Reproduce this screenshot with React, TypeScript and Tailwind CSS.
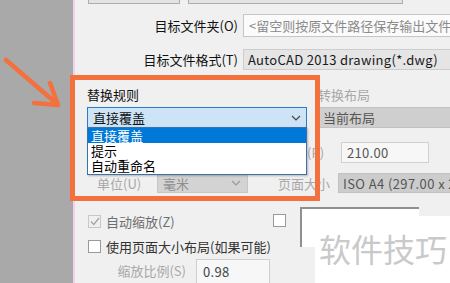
import React from 'react';

const cjk = "font-['Noto_Sans_CJK_SC','Noto_Sans',sans-serif]";

function Chevron({ color }: { color: string }) {
  return (
    <svg width="10" height="6" viewBox="0 0 10 6" className="shrink-0">
      <path d="M1 1 L5 5 L9 1" fill="none" stroke={color} strokeWidth="1.2" />
    </svg>
  );
}

function CheckBox({ checked, disabled }: { checked?: boolean; disabled?: boolean }) {
  return (
    <div
      className={
        'w-[13px] h-[13px] shrink-0 border flex items-center justify-center ' +
        (disabled ? 'border-[#c8c8c8] bg-[#f0f0f0]' : 'border-[#9a9a9a] bg-white')
      }
    >
      {checked && (
        <svg width="10" height="9" viewBox="0 0 10 9">
          <path d="M1 4.5 L3.8 7.5 L9 1" fill="none" stroke="#a5a5a5" strokeWidth="1.3" />
        </svg>
      )}
    </div>
  );
}

export default function App() {
  return (
    <div className={`relative w-[450px] h-[283px] overflow-hidden flex text-[13px] leading-none ${cjk}`}>
      {/* desktop behind the dialog */}
      <div className="w-[73px] shrink-0 bg-[#a9a9a9]" />
      <div className="w-[2px] shrink-0 bg-[#f1d2ee]" />

      {/* dialog */}
      <div className="flex-1 bg-[#f0f0f0] flex flex-col min-w-0">
        {/* bottom edges of buttons above */}
        <div className="h-[4px] flex pl-[13px] gap-[8px]">
          <div className="w-[92px] h-full border-x border-b border-[#adadad] bg-[#e3e3e3]" />
          <div className="w-[215px] h-full border-x border-b border-[#adadad] bg-[#e3e3e3]" />
        </div>

        <div className="mt-[10px] h-[25px] flex items-center">
          <div className="w-[168px] shrink-0 text-right pr-[5px] text-[#111]">目标文件夹(O)</div>
          <div className="flex-1 min-w-0 h-full border border-r-0 border-[#c6c6c6] bg-[#fbfbfb] pl-[5px] flex items-center text-[#8a8a8a] whitespace-nowrap overflow-hidden">
            &lt;留空则按原文件路径保存输出文件
          </div>
        </div>

        <div className="mt-[12px] h-[22px] flex items-center">
          <div className="w-[168px] shrink-0 text-right pr-[5px] text-[#111]">目标文件格式(T)</div>
          <div className="flex-1 h-full border border-r-0 border-[#cdcdcd] bg-[#e5e5e5] pl-[4px] flex items-center text-[#1a1a1a] tracking-[0.3px] whitespace-nowrap overflow-hidden">
            AutoCAD 2013 drawing(*.dwg)
          </div>
        </div>

        <div className="mt-[17px] h-[16px] flex items-center">
          <div className="w-[243px] shrink-0 pl-[12px] text-[#111]">替换规则</div>
          <div className="text-[#a8a8a8]">转换布局</div>
        </div>

        <div className="mt-[5px] h-[22px] flex">
          <div className="relative ml-[12px] w-[220px] shrink-0 h-full border border-[#2f7bc4] bg-[#cde4f7] flex items-center justify-between pl-[5px] pr-[5px] text-[#111]">
            <span>直接覆盖</span>
            <Chevron color="#444" />
            {/* open dropdown list */}
            <div className="absolute left-[-1px] top-full w-[220px] h-[48px] border border-[#3a72b0] bg-white shadow-[1px_1px_2px_rgba(0,0,0,0.25)] flex flex-col z-10 leading-[15px]">
              <div className="h-[15px] bg-[#0078d7] text-white pl-[3px]">直接覆盖</div>
              <div className="h-[15px] text-black pl-[3px]">提示</div>
              <div className="h-[15px] text-black pl-[3px]">自动重命名</div>
            </div>
          </div>
          <div className="ml-[11px] flex-1 h-full border border-r-0 border-[#c2c2c2] bg-[#cfcfcf] pl-[4px] flex items-center text-[#555]">
            当前布局
          </div>
        </div>

        <div className="mt-[14px] h-[22px] flex items-center pl-[232px]">
          <div className="w-[34px] shrink-0 text-[#a8a8a8]">(R)</div>
          <div className="w-[88px] shrink-0 h-full border border-[#d0d0d0] bg-[#f7f7f7] pl-[5px] flex items-center text-[#555] tracking-[0.3px]">
            210.00
          </div>
        </div>

        <div className="mt-[10px] h-[21px] flex items-center pl-[22px]">
          <div className="w-[60px] shrink-0 text-[#a8a8a8]">单位(U)</div>
          <div className="w-[91px] shrink-0 h-full border border-[#c6c6c6] bg-[#d3d3d3] pl-[5px] pr-[6px] flex items-center justify-between text-[#8e8e8e]">
            <span>毫米</span>
            <Chevron color="#9a9a9a" />
          </div>
          <div className="ml-[30px] w-[60px] shrink-0 text-[#a8a8a8]">页面大小</div>
          <div className="flex-1 min-w-0 h-full border border-r-0 border-[#c2c2c2] bg-[#cccccc] pl-[4px] flex items-center text-[#555] tracking-[0.4px] whitespace-nowrap overflow-hidden">
            ISO A4 (297.00 x 210.00 毫米)
          </div>
        </div>

        <div className="mt-[14px] flex">
          <div className="w-[198px] shrink-0 pl-[13px] pt-[8px] flex flex-col">
            <div className="h-[13px] flex items-center gap-[5px]">
              <CheckBox checked disabled />
              <span className="text-[#6e6e6e] whitespace-nowrap">自动缩放(Z)</span>
            </div>
            <div className="mt-[12px] h-[13px] flex items-center gap-[5px]">
              <CheckBox />
              <span className="text-[#333] whitespace-nowrap">使用页面大小布局(如果可能)</span>
            </div>
            <div className="mt-[6px] h-[24px] flex items-center">
              <div className="w-[108px] shrink-0 text-right pr-[10px] text-[#a8a8a8]">缩放比例(S)</div>
              <div className="w-[74px] shrink-0 h-full border border-b-0 border-[#cfcfcf] bg-[#f7f7f7] pl-[6px] flex items-center text-[#444] tracking-[0.3px]">
                0.98
              </div>
            </div>
          </div>
          <div className="flex">
            <div className="mt-[7px]">
              <CheckBox />
            </div>
            <div className="ml-[14px] w-[119px] h-[40px] border-t-2 border-l-2 border-[#8f8f8f] bg-white" />
          </div>
        </div>
      </div>

      {/* orange highlight frame */}
      <div className="absolute left-[70px] top-[75px] w-[250px] h-[126px] border-[5px] border-[#f4703c]" />

      {/* arrow */}
      <svg className="absolute left-0 top-0" width="90" height="120" viewBox="0 0 90 120">
        <g fill="none" stroke="#f4703c" strokeWidth="4.5" strokeLinecap="round" strokeLinejoin="round">
          <path d="M6 60 L56 103" />
          <path d="M50 83 L58 105 L34 103" />
        </g>
      </svg>

      {/* watermark */}
      <div className="absolute left-[315px] top-[216px] w-[135px] h-[67px] bg-white pl-[4px] pt-[16px] text-[32px] leading-none text-[#c9c9c9] whitespace-nowrap">
        软件技巧
      </div>
    </div>
  );
}
